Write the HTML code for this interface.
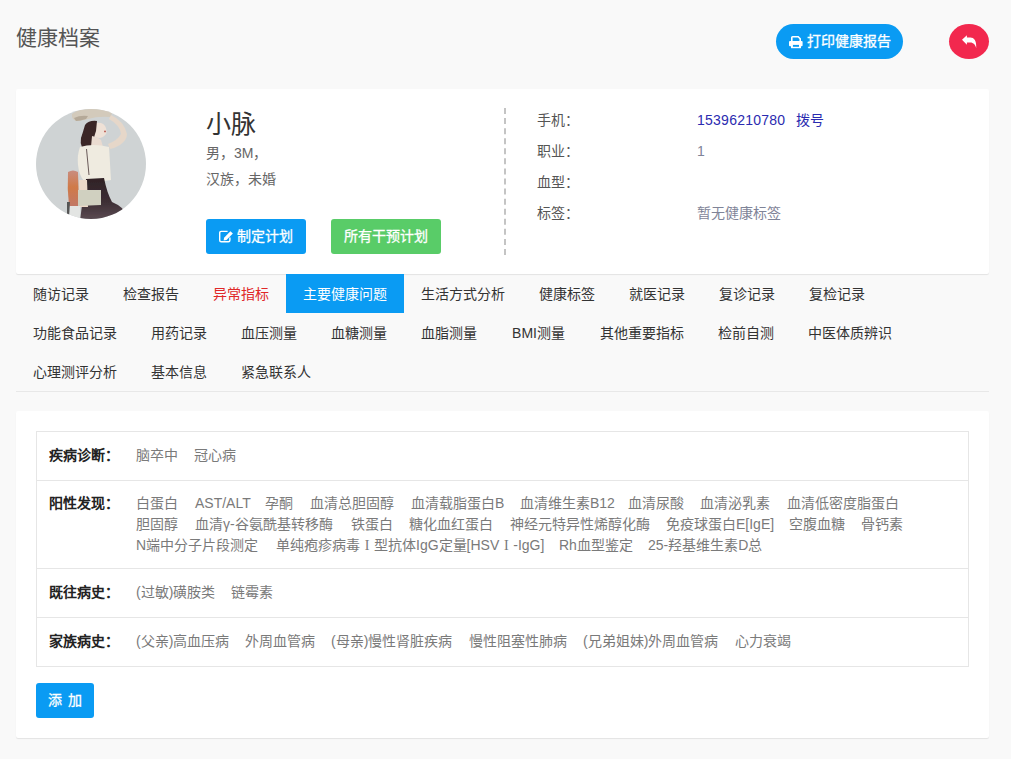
<!DOCTYPE html>
<html lang="zh-CN"><head><meta charset="utf-8">
<style>
*{margin:0;padding:0;box-sizing:border-box}
html,body{width:1011px;height:759px;overflow:hidden;background:#f9f9f9;font-family:"Liberation Sans",sans-serif;color:#333;font-size:14px;letter-spacing:0}
.l{font-size:14px;letter-spacing:0}
.phone .l{letter-spacing:0.25px}
.abs{position:absolute}
svg{display:block}
.title{left:16px;top:24px;font-size:21px;letter-spacing:0;color:#555;line-height:28px;white-space:nowrap}
.printbtn{left:776px;top:24px;width:127px;height:35px;border-radius:18px;background:#0a9bf3}
.printbtn span{position:absolute;left:31px;top:0;line-height:35px;color:#fff;font-size:14px;font-weight:400;-webkit-text-stroke:0.3px #fff;white-space:nowrap}
.backbtn{left:949px;top:24px;width:40px;height:35px;border-radius:50%;background:#f2284e}
.card{background:#fff;border-radius:2px;box-shadow:0 1px 1px rgba(0,0,0,0.09)}
.card1{left:16px;top:89px;width:973px;height:185px}
.avatar{left:36px;top:109px;width:110px;height:110px}
.name{left:206px;top:109px;font-size:25px;letter-spacing:0;line-height:30px;color:#333;white-space:nowrap}
.sub{left:206px;font-size:14px;color:#666;line-height:20px;white-space:nowrap}
.btn{height:35px;border-radius:3px}
.btn span{position:absolute;top:0;line-height:35px;color:#fff;font-size:14px;font-weight:400;-webkit-text-stroke:0.3px #fff;white-space:nowrap}
.dash{left:504px;top:108px;height:147px;border-left:2px dashed #c4c4c4}
.lbl{left:537px;color:#555;line-height:20px;white-space:nowrap}
.val{color:#7f8498;line-height:20px;white-space:nowrap}
.tabline{left:16px;top:391px;width:973px;height:1px;background:#e8e8e8}
.tab{position:absolute;height:39px;line-height:39px;padding:1px 0 0 0;text-align:center;color:#333;font-size:14px;white-space:nowrap}
.tab.on{background:#0a9bf3;color:#fff}
.tab.red{color:#e02828}
.card2{left:16px;top:411px;width:973px;height:327px}
.tbl{left:36px;top:431px;width:933px;height:236px;border:1px solid #e6e6e6}
.hl{position:absolute;left:37px;width:931px;height:1px;background:#e6e6e6}
.v{position:absolute;line-height:20px;color:#7a7a7a;white-space:nowrap;font-size:14px}
.rn{display:inline-block;width:14px;font-size:14px;letter-spacing:0;text-align:center;font-family:"Liberation Serif",serif}
.lb{position:absolute;left:49px;line-height:20px;color:#222;font-weight:bold;white-space:nowrap;font-size:14px}
.addbtn{left:36px;top:683px;width:58px;height:35px;border-radius:3px;background:#0a9bf3}
.addbtn span{position:absolute;left:12px;letter-spacing:1px;top:0;line-height:35px;color:#fff;font-weight:400;-webkit-text-stroke:0.3px #fff;white-space:nowrap}
</style></head><body>
<div class="abs title">健康档案</div>
<div class="abs printbtn">
  <svg class="abs" style="left:13px;top:12px" width="14" height="13" viewBox="0 0 14 13">
    <path d="M2.8 5.2V1.6Q2.8 0.8 3.6 0.8H9.2L11.2 2.8V5.2" fill="none" stroke="#fff" stroke-width="1.6"/>
    <rect x="0" y="5" width="13.6" height="5.3" rx="1" fill="#fff"/>
    <rect x="2" y="9" width="10" height="3.2" fill="#fff"/>
    <rect x="3.9" y="8.9" width="6.1" height="1.9" fill="#0a9bf3"/>
  </svg>
  <span>打印健康报告</span>
</div>
<div class="abs backbtn">
  <svg class="abs" style="left:13px;top:11px" width="15" height="14" viewBox="0 0 15 14">
    <path d="M0 4.8L4.9 0.2V2.6H8.3C12.2 2.6 14.6 5.8 14.2 13.2C13.6 9.8 11.3 7.4 8.3 7.4H4.9V9.7Z" fill="#fff"/>
  </svg>
</div>

<div class="abs card card1"></div>
<svg class="abs avatar" viewBox="0 0 110 110">
  <defs><clipPath id="cc"><circle cx="55" cy="55" r="55"/></clipPath>
  <filter id="sf" x="-5%" y="-5%" width="110%" height="110%"><feGaussianBlur stdDeviation="0.45"/></filter>
  <linearGradient id="bag" x1="0" y1="0" x2="0" y2="1"><stop offset="0" stop-color="#c98d80"/><stop offset="0.45" stop-color="#d07a48"/><stop offset="1" stop-color="#c07868"/></linearGradient>
  <linearGradient id="skirt" x1="0" y1="0" x2="0" y2="1"><stop offset="0" stop-color="#2f2226"/><stop offset="0.55" stop-color="#3d2e34"/><stop offset="1" stop-color="#5d4d55"/></linearGradient>
  </defs>
  <g clip-path="url(#cc)">
    <rect width="110" height="110" fill="#cfd3d4"/>
    <g filter="url(#sf)">
    <path d="M36 5 Q42 0 54 0 Q66 -1 76 3 L75 8 Q62 7 52 10 Q44 12 40 12 Q35 10 36 5 Z" fill="#d3cabb"/>
    <path d="M38 9 Q44 6 52 7 L50 10 Q44 12 40 12 Z" fill="#b5a998"/>
    <path d="M75 6 Q88 12 91 25 Q91 31 84 36 Q79 39 74 40 L72 35 Q82 31 85 25 Q84 16 73 10 Z" fill="#e6d7c9"/>
    <path d="M60 14 Q68 13 70 19 Q71 23 70 25 Q67 29 63 29 L58 28 Z" fill="#efe1d6"/>
    <circle cx="69" cy="22.4" r="0.9" fill="#b5504a"/>
    <path d="M49 16 Q53 11 61 12 L60 22 Q57 30 58 35 Q53 40 46 38.5 Q44 34 45 29 Q47 23 49 16 Z" fill="#3a2626"/>
    <path d="M56 27 Q62 28 65 31 L67 38 Q61 40 55 38 Z" fill="#eadbd0"/>
    <path d="M44 38 Q57 34 73 38 L75 71 Q61 74 48 72 Q43 66 42 56 Q41 46 44 38 Z" fill="#efebe0"/>
    <path d="M50.5 40 L53 66" stroke="#5a4a4a" stroke-width="0.9" fill="none"/>
    <path d="M50 70 L68 69 Q71 84 76 93 Q88 98 90 106 L88 112 L44 112 L46 96 Q49 84 50 70 Z" fill="url(#skirt)"/>
    <path d="M32 63 Q37 60 42 63 L43 97 Q38 100 33 97 Q31 80 32 63 Z" fill="url(#bag)"/>
    <path d="M43 71 L51 71 L52 98 L44 98 Z" fill="#ecd8c8"/>
    <path d="M42 81 L65 81 L65 96 L42 97 Z" fill="#d0d0c0"/>
    <path d="M31 93 L34 93 L33 107 L31 107 Z" fill="#555"/>
    <path d="M34 97 L44 97 L44 110 L34 110 Z" fill="#e3e5e3"/>
    </g>
  </g>
</svg>
<div class="abs name">小脉</div>
<div class="abs sub" style="top:143px">男，<span class="l">3M</span>，</div>
<div class="abs sub" style="top:169px">汉族，未婚</div>
<div class="abs btn" style="left:206px;top:219px;width:100px;background:#0a9bf3">
  <svg class="abs" style="left:13px;top:11px" width="15" height="13" viewBox="0 0 15 13">
    <path d="M8.6 1.4H2.2Q0.7 1.4 0.7 2.9V10.3Q0.7 11.8 2.2 11.8H9.4Q10.9 11.8 10.9 10.3V7.6" fill="none" stroke="#fff" stroke-width="1.4"/>
    <path d="M4.6 10.4L5.1 7.7L11.4 1.3L13.9 3.6L7.5 10Z" fill="#fff"/>
  </svg>
  <span style="left:31px">制定计划</span>
</div>
<div class="abs btn" style="left:331px;top:219px;width:110px;background:#59cc68"><span style="left:13px">所有干预计划</span></div>
<div class="abs dash"></div>
<div class="abs lbl" style="top:110px">手机：</div>
<div class="abs lbl" style="top:141px">职业：</div>
<div class="abs lbl" style="top:172px">血型：</div>
<div class="abs lbl" style="top:203px">标签：</div>
<div class="abs val phone" style="left:697px;top:110px;color:#2b2bb0"><span class="l">15396210780</span></div>
<div class="abs val" style="left:796px;top:110px;color:#2b2bb0">拨号</div>
<div class="abs val" style="left:697px;top:141px"><span class="l">1</span></div>
<div class="abs val" style="left:697px;top:203px">暂无健康标签</div>

<div class="tab " style="left:16px;top:274px;width:90px">随访记录</div>
<div class="tab " style="left:106px;top:274px;width:90px">检查报告</div>
<div class="tab red" style="left:196px;top:274px;width:90px">异常指标</div>
<div class="tab on" style="left:286px;top:274px;width:118px">主要健康问题</div>
<div class="tab " style="left:404px;top:274px;width:118px">生活方式分析</div>
<div class="tab " style="left:522px;top:274px;width:90px">健康标签</div>
<div class="tab " style="left:612px;top:274px;width:90px">就医记录</div>
<div class="tab " style="left:702px;top:274px;width:90px">复诊记录</div>
<div class="tab " style="left:792px;top:274px;width:90px">复检记录</div>
<div class="tab " style="left:16px;top:313px;width:118px">功能食品记录</div>
<div class="tab " style="left:134px;top:313px;width:90px">用药记录</div>
<div class="tab " style="left:224px;top:313px;width:90px">血压测量</div>
<div class="tab " style="left:314px;top:313px;width:90px">血糖测量</div>
<div class="tab " style="left:404px;top:313px;width:90px">血脂测量</div>
<div class="tab " style="left:494px;top:313px;width:89px"><span class="l">BMI</span>测量</div>
<div class="tab " style="left:583px;top:313px;width:118px">其他重要指标</div>
<div class="tab " style="left:701px;top:313px;width:90px">检前自测</div>
<div class="tab " style="left:791px;top:313px;width:118px">中医体质辨识</div>
<div class="tab " style="left:16px;top:352px;width:118px">心理测评分析</div>
<div class="tab " style="left:134px;top:352px;width:90px">基本信息</div>
<div class="tab " style="left:224px;top:352px;width:104px">紧急联系人</div>
<div class="abs tabline"></div>

<div class="abs card card2"></div>
<div class="abs tbl"></div>
<div class="hl" style="top:480px"></div>
<div class="hl" style="top:568px"></div>
<div class="hl" style="top:617px"></div>
<div class="v" style="left:136px;top:445px">脑卒中</div>
<div class="v" style="left:194px;top:445px">冠心病</div>
<div class="v" style="left:136px;top:493px">白蛋白</div>
<div class="v" style="left:195px;top:493px"><span class="l">AST/ALT</span></div>
<div class="v" style="left:265px;top:493px">孕酮</div>
<div class="v" style="left:310px;top:493px">血清总胆固醇</div>
<div class="v" style="left:411px;top:493px">血清载脂蛋白<span class="l">B</span></div>
<div class="v" style="left:520px;top:493px">血清维生素<span class="l">B12</span></div>
<div class="v" style="left:628px;top:493px">血清尿酸</div>
<div class="v" style="left:700px;top:493px">血清泌乳素</div>
<div class="v" style="left:787px;top:493px">血清低密度脂蛋白</div>
<div class="v" style="left:136px;top:514px">胆固醇</div>
<div class="v" style="left:195px;top:514px">血清<span class="l">γ-</span>谷氨酰基转移酶</div>
<div class="v" style="left:351px;top:514px">铁蛋白</div>
<div class="v" style="left:409px;top:514px">糖化血红蛋白</div>
<div class="v" style="left:510px;top:514px">神经元特异性烯醇化酶</div>
<div class="v" style="left:666px;top:514px">免疫球蛋白<span class="l">E[IgE]</span></div>
<div class="v" style="left:789px;top:514px">空腹血糖</div>
<div class="v" style="left:861px;top:514px">骨钙素</div>
<div class="v" style="left:136px;top:535px"><span class="l">N</span>端中分子片段测定</div>
<div class="v" style="left:276px;top:535px">单纯疱疹病毒<span class="rn"><span class="l">I</span></span>型抗体<span class="l">IgG</span>定量<span class="l">[HSV</span><span class="rn"><span class="l">I</span></span><span class="l">-IgG]</span></div>
<div class="v" style="left:559px;top:535px"><span class="l">Rh</span>血型鉴定</div>
<div class="v" style="left:648px;top:535px"><span class="l">25-</span>羟基维生素<span class="l">D</span>总</div>
<div class="v" style="left:136px;top:582px"><span class="l">(</span>过敏<span class="l">)</span>磺胺类</div>
<div class="v" style="left:231px;top:582px">链霉素</div>
<div class="v" style="left:136px;top:631px"><span class="l">(</span>父亲<span class="l">)</span>高血压病</div>
<div class="v" style="left:245px;top:631px">外周血管病</div>
<div class="v" style="left:331px;top:631px"><span class="l">(</span>母亲<span class="l">)</span>慢性肾脏疾病</div>
<div class="v" style="left:469px;top:631px">慢性阻塞性肺病</div>
<div class="v" style="left:583px;top:631px"><span class="l">(</span>兄弟姐妹<span class="l">)</span>外周血管病</div>
<div class="v" style="left:735px;top:631px">心力衰竭</div>
<div class="lb" style="top:445px">疾病诊断：</div>
<div class="lb" style="top:493px">阳性发现：</div>
<div class="lb" style="top:582px">既往病史：</div>
<div class="lb" style="top:631px">家族病史：</div>
<div class="abs addbtn"><span>添 加</span></div>
</body></html>
